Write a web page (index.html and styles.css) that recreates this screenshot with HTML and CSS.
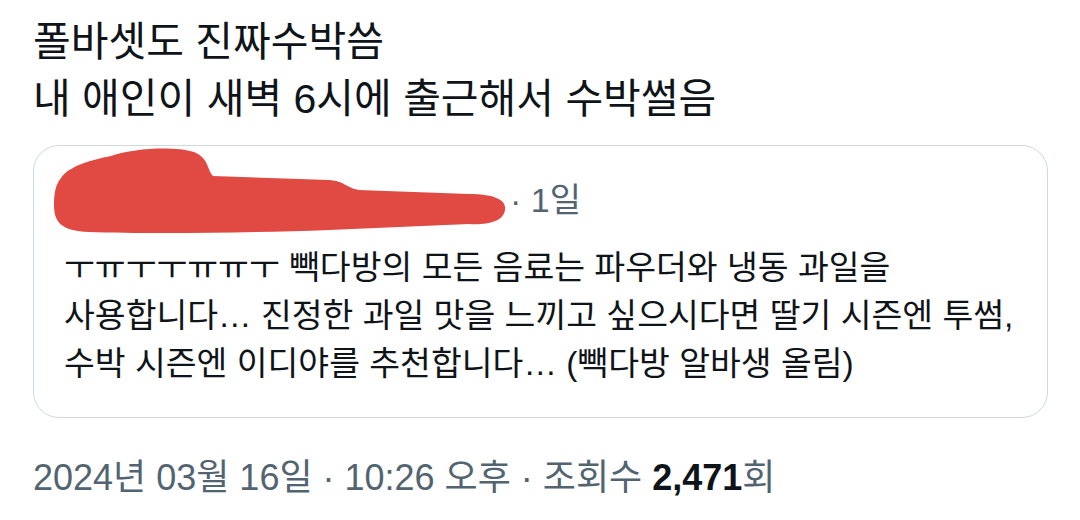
FILE: index.html
```html
<!DOCTYPE html>
<html lang="ko">

<head>
    <meta charset="UTF-8">
    <meta name="viewport" content="width=device-width, initial-scale=1.0">
    <title>트윗</title>
    <link rel="stylesheet" href="styles.css">
</head>

<body>
    <article class="tweet">
        <p class="tweet-text">폴바셋도 진짜수박씀<br>내 애인이 새벽 6시에 출근해서 수박썰음</p>

        <!-- 인용 트윗 -->
        <div class="quote">
            <div class="quote-head">
                <svg class="redact" width="452" height="95" viewBox="55 145 452 95">
                    <path d="M62 178 C70 166 92 160 112 156 C135 148 175 146 195 152 C210 158 208 170 214 176 L330 180 C345 181 348 188 360 190 L470 194 C495 194 508 200 506 210 C504 222 488 225 470 224 L330 230 C250 233 150 234 90 232 C62 231 55 222 55 205 C55 192 57 184 62 178 Z" fill="#e04a43" />
                </svg>
                <span class="quote-time">· 1일</span>
            </div>
            <p class="quote-text">ㅜㅠㅜㅜㅠㅠㅜ 빽다방의 모든 음료는 파우더와 냉동 과일을<br>사용합니다… 진정한 과일 맛을 느끼고 싶으시다면 딸기 시즌엔 투썸,<br>수박 시즌엔 이디야를 추천합니다… (빽다방 알바생 올림)</p>
        </div>

        <div class="meta">2024년 03월 16일 · 10:26 오후 · 조회수 <b>2,471</b>회</div>
    </article>
</body>

</html>
```

FILE: styles.css
```css
* {
    margin: 0;
    padding: 0;
    box-sizing: border-box;
}

body {
    background-color: #ffffff;
    color: #0f1419;
    font-family: "Liberation Sans", "Noto Sans CJK KR", sans-serif;
    padding: 14px 32px 0 33px;
}

.tweet-text {
    font-size: 41px;
    line-height: 57px;
}

.quote {
    margin-top: 17px;
    border: 1px solid #cfd9de;
    border-radius: 26px;
    padding: 27px 30px 29px;
}

.quote-head {
    display: flex;
    align-items: center;
    height: 48px;
    font-size: 34px;
    color: #536471;
}

.redact {
    align-self: flex-start;
    margin: -28px 0 -19px -10px;
    flex-shrink: 0;
}

.quote-time {
    margin-left: 4px;
}

.quote-text {
    margin-top: 23px;
    font-size: 33.5px;
    line-height: 48px;
    white-space: nowrap;
}

.meta {
    margin-top: 36px;
    font-size: 36px;
    line-height: 48px;
    color: #536471;
}

.meta b {
    color: #0f1419;
    font-weight: 700;
}
```
